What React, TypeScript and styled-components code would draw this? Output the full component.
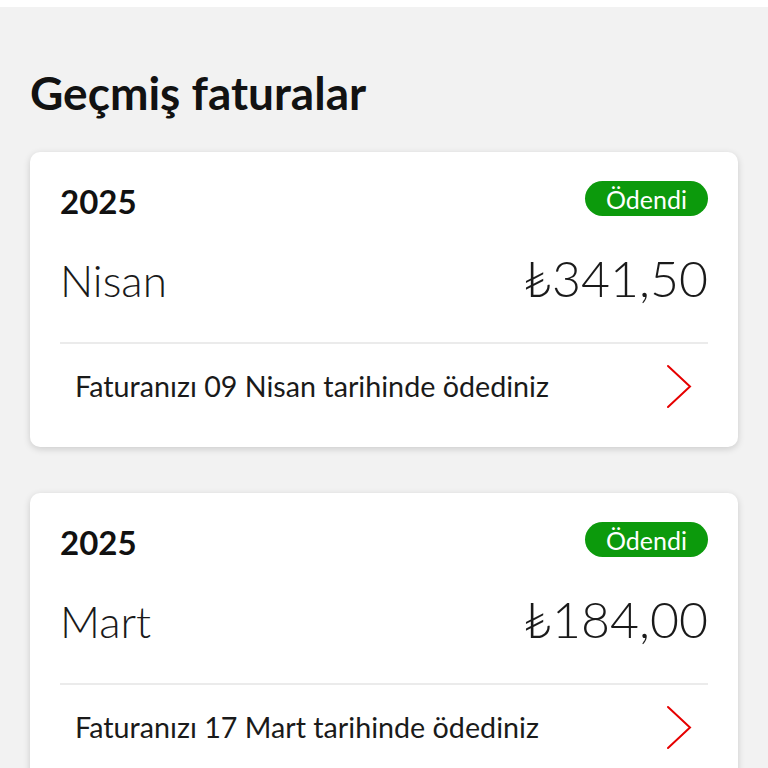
import React from "react";
import styled, { createGlobalStyle } from "styled-components";

const GlobalStyle = createGlobalStyle`
  html, body {
    margin: 0;
    padding: 0;
    background: #f2f2f2;
    font-family: Lato, "Open Sans", "Liberation Sans", sans-serif;
    color: #111;
  }
`;

const TopStrip = styled.div`
  height: 7px;
  background: #ffffff;
`;

const Page = styled.div`
  padding: 0 30px 40px;
`;

const Title = styled.h1`
  margin: 58px 0 32px;
  font-size: 46px;
  line-height: 55px;
  font-weight: 700;
  color: #121212;
`;

const List = styled.div`
  display: flex;
  flex-direction: column;
  gap: 46px;
`;

const Card = styled.div`
  background: #ffffff;
  border-radius: 10px;
  box-shadow: 0 2px 7px rgba(0, 0, 0, 0.16);
  padding: 29px 30px 0;
`;

const HeadRow = styled.div`
  display: flex;
  justify-content: space-between;
  align-items: flex-start;
`;

const Year = styled.div`
  font-size: 33px;
  line-height: 40px;
  font-weight: 700;
  color: #111;
`;

const Badge = styled.span<{ $color: string }>`
  display: inline-flex;
  align-items: center;
  height: 35px;
  padding: 0 21px;
  border-radius: 18px;
  background: ${(p) => p.$color};
  color: #ffffff;
  font-size: 25px;
  font-weight: 400;
`;

const AmountRow = styled.div`
  display: flex;
  justify-content: space-between;
  align-items: baseline;
  margin-top: 27px;
  height: 60px;
`;

const Month = styled.div`
  font-size: 44px;
  line-height: 55px;
  font-weight: 300;
  color: #1a1a1a;
`;

const Amount = styled.div`
  font-size: 50px;
  line-height: 60px;
  font-weight: 300;
  color: #1a1a1a;
`;

const Divider = styled.hr`
  margin: 34px 0 0;
  border: 0;
  height: 2px;
  background: #ebebeb;
`;

const FootRow = styled.div`
  display: flex;
  justify-content: space-between;
  align-items: center;
  padding: 20px 16px 38px 15px;
`;

const FootText = styled.span`
  font-size: 28.7px;
  line-height: 35px;
  font-weight: 400;
  color: #1a1a1a;
`;

const Chevron = () => (
  <svg width="26" height="45" viewBox="0 0 26 45" fill="none">
    <path d="M2 2 L24 22.5 L2 43" stroke="#e60000" strokeWidth="2" strokeLinecap="round" strokeLinejoin="miter" />
  </svg>
);

type Bill = { year: string; month: string; amount: string; paidOn: string };

const bills: Bill[] = [
  { year: "2025", month: "Nisan", amount: "₺341,50", paidOn: "09 Nisan" },
  { year: "2025", month: "Mart", amount: "₺184,00", paidOn: "17 Mart" },
];

const BillCard = ({ bill }: { bill: Bill }) => (
  <Card>
    <HeadRow>
      <Year>{bill.year}</Year>
      <Badge $color="#0c9a0c">Ödendi</Badge>
    </HeadRow>
    <AmountRow>
      <Month>{bill.month}</Month>
      <Amount>{bill.amount}</Amount>
    </AmountRow>
    <Divider />
    <FootRow>
      <FootText>Faturanızı {bill.paidOn} tarihinde ödediniz</FootText>
      <Chevron />
    </FootRow>
  </Card>
);

export default function App() {
  return (
    <>
      <GlobalStyle />
      <TopStrip />
      <Page>
        <Title>Geçmiş faturalar</Title>
        <List>
          {bills.map((b, i) => (
            <BillCard key={i} bill={b} />
          ))}
        </List>
      </Page>
    </>
  );
}
